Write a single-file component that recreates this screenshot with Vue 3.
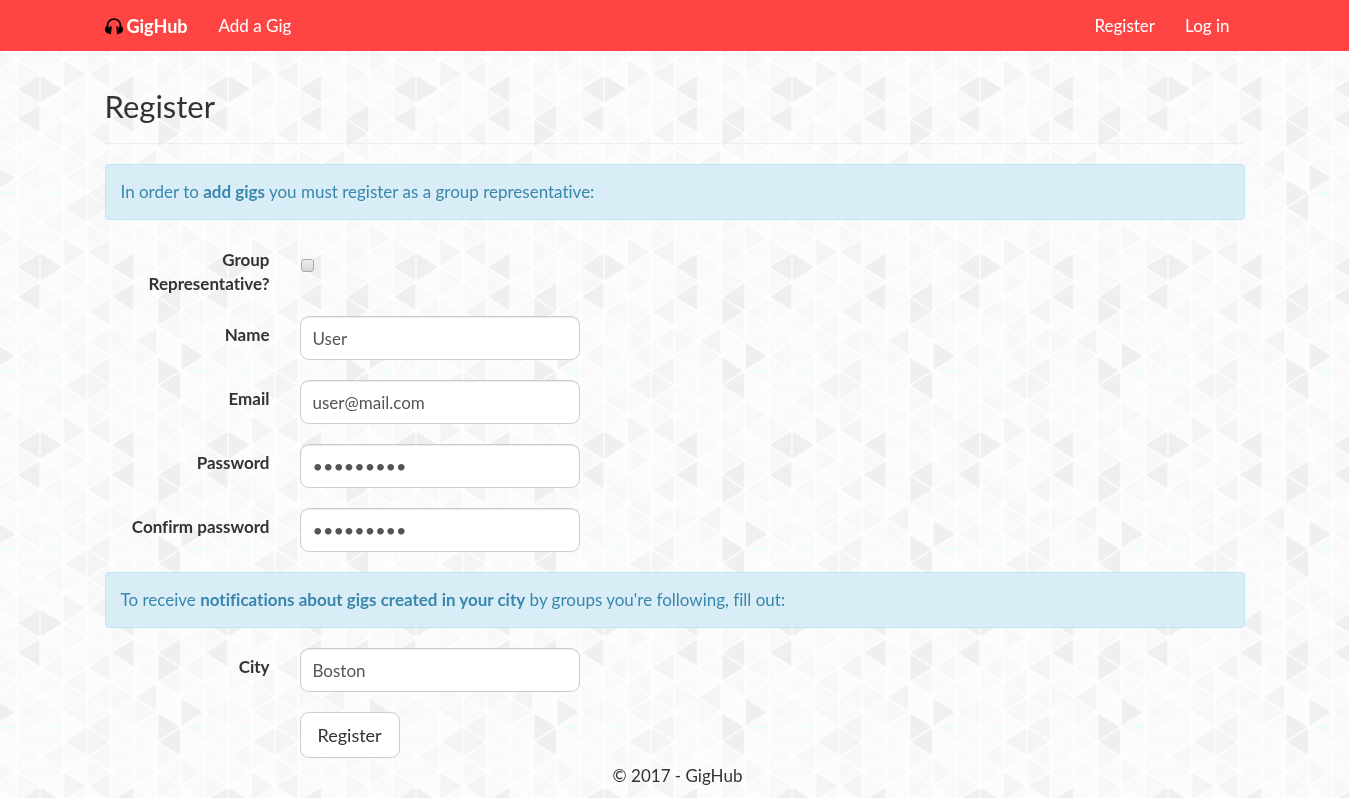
<script setup>
import { ref } from 'vue'

const form = ref({
  representative: false,
  name: 'User',
  email: 'user@mail.com',
  password: 'secret123',
  confirm: 'secret123',
  city: 'Boston'
})

const accountFields = [
  { key: 'name', label: 'Name', type: 'text' },
  { key: 'email', label: 'Email', type: 'text' },
  { key: 'password', label: 'Password', type: 'password' },
  { key: 'confirm', label: 'Confirm password', type: 'password' }
]

// Background tile: 8 columns of triangles, 12 half-steps high, one letter per shade.
const tile = { width: 188, height: 178, cols: 8, rows: 12 }
const shades = { a: '#fcfcfc', b: '#fafafa', c: '#f8f8f8', d: '#f4f4f4', e: '#efefef' }
const rows = [
  'bbacbbbc',
  'caddbacb',
  'eebaebba',
  'cacbcacb',
  'ebabebeb',
  'bcbdbbec',
  'abcabacb',
  'bacccdab',
  'cbcbbcae',
  'bbadbbeb',
  'bbddbbea',
  'bcbcbaca'
]
const colWidth = tile.width / tile.cols
const step = tile.height / tile.rows
const triangles = []
const joints = []
for (let r = 0; r <= tile.rows; r++) {
  for (let c = 0; c <= tile.cols; c++) {
    const x = c * colWidth
    const y = r * step
    const atJoint = r % 2 === c % 2
    if (atJoint) joints.push({ x, y })
    if (c === tile.cols) continue
    const base = atJoint ? x + colWidth : x
    const apex = atJoint ? x : x + colWidth
    triangles.push({
      points: `${base},${y - step} ${base},${y + step} ${apex},${y}`,
      fill: shades[rows[r % tile.rows][c]]
    })
  }
}
</script>

<template>
  <div class="page">
    <svg class="backdrop" aria-hidden="true">
      <defs>
        <pattern id="triangles" :width="tile.width" :height="tile.height" patternUnits="userSpaceOnUse" patternTransform="translate(16.5 59.5)">
          <polygon v-for="(t, i) in triangles" :key="i" :points="t.points" :fill="t.fill" stroke="#ffffff" stroke-width="1.2" />
          <circle v-for="(j, i) in joints" :key="'j' + i" :cx="j.x" :cy="j.y" r="2" fill="#ffffff" />
          <path d="M28 133.500Q37 130 47 133.500Q37 137 28 133.500Z" fill="#f2fefe" />
          <path d="M170 133L187 132V135H180Z" fill="#e6fefe" />
        </pattern>
      </defs>
      <rect width="100%" height="100%" fill="url(#triangles)" />
    </svg>

    <header class="navbar">
      <nav class="container bar">
        <a href="#" class="brand">
          <svg class="logo" viewBox="0 0 18 18" aria-hidden="true">
            <path d="M2.500 11V8.500a6.500 6.500 0 0 1 13 0V11" fill="none" stroke="#000" stroke-width="1.700" />
            <path d="M3.500 8.500C1.200 8.800 0 10.500 0 12.500c0 1.800 1 3.300 2.600 3.800l.6-2.600zM5 9.200l1.800.4-.9 7.600-1.900-.4z" />
            <path d="M14.500 8.500c2.300.3 3.500 2 3.500 4 0 1.800-1 3.300-2.600 3.800l-.6-2.600zM13 9.200l-1.800.4.9 7.600 1.900-.4z" />
            <path d="M2.500 10.500h2.200v6H2.500zM13.300 10.500h2.200v6h-2.200z" />
          </svg>
          GigHub
        </a>
        <a href="#" class="link">Add a Gig</a>
        <a href="#" class="link push">Register</a>
        <a href="#" class="link">Log in</a>
      </nav>
    </header>

    <main class="container">
      <h2>Register</h2>
      <form @submit.prevent>
        <hr />
        <p class="alert">In order to <strong>add gigs</strong> you must register as a group representative:</p>

        <div class="row check-row">
          <label for="representative">Group Representative?</label>
          <input id="representative" v-model="form.representative" type="checkbox" class="check" />
        </div>
        <div v-for="f in accountFields" :key="f.key" class="row">
          <label :for="f.key">{{ f.label }}</label>
          <input :id="f.key" v-model="form[f.key]" :type="f.type" class="field" />
        </div>

        <p class="alert">To receive <strong>notifications about gigs created in your city</strong> by groups you're following, fill out:</p>

        <div class="row">
          <label for="city">City</label>
          <input id="city" v-model="form.city" type="text" class="field" />
        </div>
        <div class="row actions">
          <button type="submit">Register</button>
        </div>
      </form>
      <footer>© 2017 - GigHub</footer>
    </main>
  </div>
</template>

<style>
body {
  margin: 0;
  background: #fcfcfc;
}
</style>

<style scoped>
.page {
  color: #333;
  font: 17px/24px Lato, "Liberation Sans", sans-serif;
  font-variant-ligatures: none;
}
.page *,
.page {
  box-sizing: border-box;
}
.backdrop {
  position: fixed;
  inset: 0;
  z-index: -1;
  width: 100%;
  height: 100%;
}
.container {
  max-width: 1170px;
  margin: 0 auto;
  padding: 0 15px;
}
.navbar {
  background: #ff4444;
}
.bar {
  display: flex;
  align-items: center;
  height: 51px;
}
.bar a {
  color: #fff;
  text-decoration: none;
}
.brand {
  display: flex;
  align-items: center;
  gap: 4px;
  margin-right: 16px;
  font-size: 18px;
  font-weight: 700;
}
.logo {
  width: 18px;
  height: 18px;
}
.link {
  padding: 0 15px;
}
.push {
  margin-left: auto;
}
h2 {
  margin: 0;
  padding: 39px 0 1px;
  font-size: 31px;
  font-weight: 400;
  line-height: 32px;
}
hr {
  height: 1px;
  margin: 20px 0;
  border: 0;
  background: #eee;
}
.alert {
  margin: 0 0 20px;
  padding: 15px;
  border: 1px solid #bce8f1;
  border-radius: 4px;
  background: #d9edf7;
  color: #3a87ad;
}
.row {
  display: grid;
  grid-template-columns: 165px 280px;
  column-gap: 30px;
  align-items: start;
  margin-bottom: 20px;
}
.row label {
  padding-top: 7px;
  text-align: right;
  font-weight: 700;
}
.check-row {
  padding-top: 1px;
}
.check {
  appearance: none;
  width: 13px;
  height: 13px;
  margin: 18px 1px 0;
  border: 1px solid #aaa;
  border-radius: 3px;
  background: linear-gradient(#eee, #d8d8d8);
}
.check:checked {
  background: #3a87ad;
}
.field {
  width: 100%;
  height: 44px;
  padding: 8px 12px;
  border: 1px solid #ccc;
  border-radius: 9px;
  background: #fff;
  box-shadow: inset 0 1px 1px rgba(0, 0, 0, 0.08);
  color: #555;
  font: inherit;
}
.field[type="password"] {
  font-size: 18px;
}
.actions {
  margin-bottom: 0;
}
.actions button {
  grid-column: 2;
  justify-self: start;
  height: 46px;
  padding: 0 17px;
  border: 1px solid #ccc;
  border-radius: 9px;
  background: #fff;
  color: #333;
  font: inherit;
  font-size: 18px;
}
footer {
  padding: 6px 0 10px 6px;
  text-align: center;
}
</style>
